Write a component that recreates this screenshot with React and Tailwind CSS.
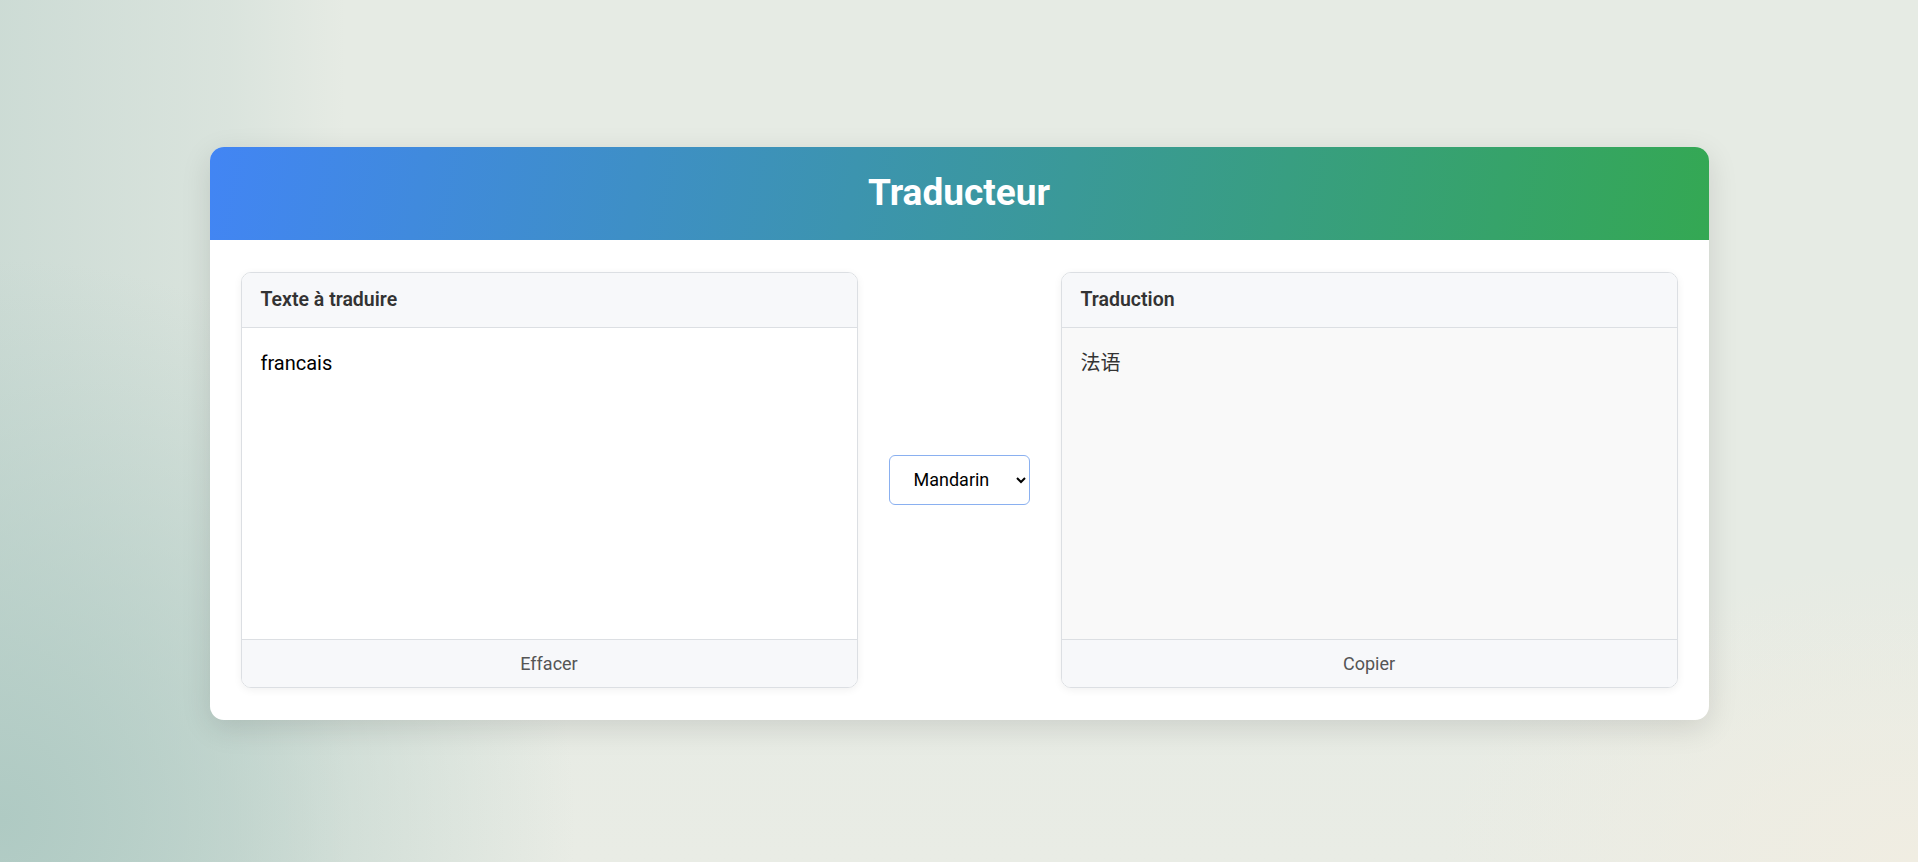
import { useState } from 'react'

function Panel({ title, footer, children, muted }) {
  return (
    <div className="flex-1 flex flex-col h-[416px] rounded-[10px] border border-[#dcdfe3] overflow-hidden shadow-[0_2px_8px_rgba(0,0,0,0.06)]">
      <div className="h-[55px] flex items-center px-[19px] bg-[#f7f8fa] border-b border-[#dcdfe3]">
        <span className="text-[19.5px] font-semibold text-[#333]">{title}</span>
      </div>
      <div className={`flex-1 ${muted ? 'bg-[#f9f9f9]' : 'bg-white'}`}>{children}</div>
      <div className="h-[48px] flex items-center justify-center bg-[#f7f8fa] border-t border-[#dcdfe3]">
        <span className="text-[18px] text-[#555]">{footer}</span>
      </div>
    </div>
  )
}

export default function App() {
  const [text, setText] = useState('francais')
  const [lang, setLang] = useState('Mandarin')

  return (
    <div
      className="w-full h-[862px] flex items-center justify-center pt-[4px] font-['Roboto','Noto_Sans_CJK_SC',sans-serif]
                 bg-[radial-gradient(ellipse_30%_65%_at_0%_95%,#afcac3_0%,rgba(175,202,195,0)_100%),linear-gradient(90deg,rgba(196,214,208,0.75)_0%,rgba(196,214,208,0.35)_12%,rgba(196,214,208,0)_18%),radial-gradient(ellipse_25%_35%_at_100%_100%,#f0ede2_0%,rgba(240,237,226,0)_100%),linear-gradient(180deg,#e6ebe4_0%,#e6ebe4_70%,#e9ece5_100%)]"
    >
      <div className="w-[1499px] rounded-[14px] bg-white overflow-hidden shadow-[0_8px_30px_rgba(0,0,0,0.12)]">
        <div className="h-[93px] flex items-center justify-center bg-[linear-gradient(100deg,#4285f4_0%,#34a853_100%)]">
          <h1 className="text-[37px] font-bold text-white">Traducteur</h1>
        </div>
        <div className="flex items-center gap-[31px] px-[31px] py-8">
          <Panel title="Texte à traduire" footer="Effacer">
            <textarea
              value={text}
              onChange={e => setText(e.target.value)}
              spellCheck
              className="w-full h-full resize-none outline-none px-[19px] py-[20px] text-[20px] text-black bg-transparent"
            />
          </Panel>
          <select
            value={lang}
            onChange={e => setLang(e.target.value)}
            className="w-[141px] h-[50px] pl-[20px] pr-[6px] rounded-[6px] border border-[#8ab0f0] bg-white text-[18px] text-black outline-none"
          >
            <option>Mandarin</option>
            <option>Anglais</option>
            <option>Espagnol</option>
          </select>
          <Panel title="Traduction" footer="Copier" muted>
            <div className="px-[19px] py-[20px] text-[20px] text-[#333]">法语</div>
          </Panel>
        </div>
      </div>
    </div>
  )
}
